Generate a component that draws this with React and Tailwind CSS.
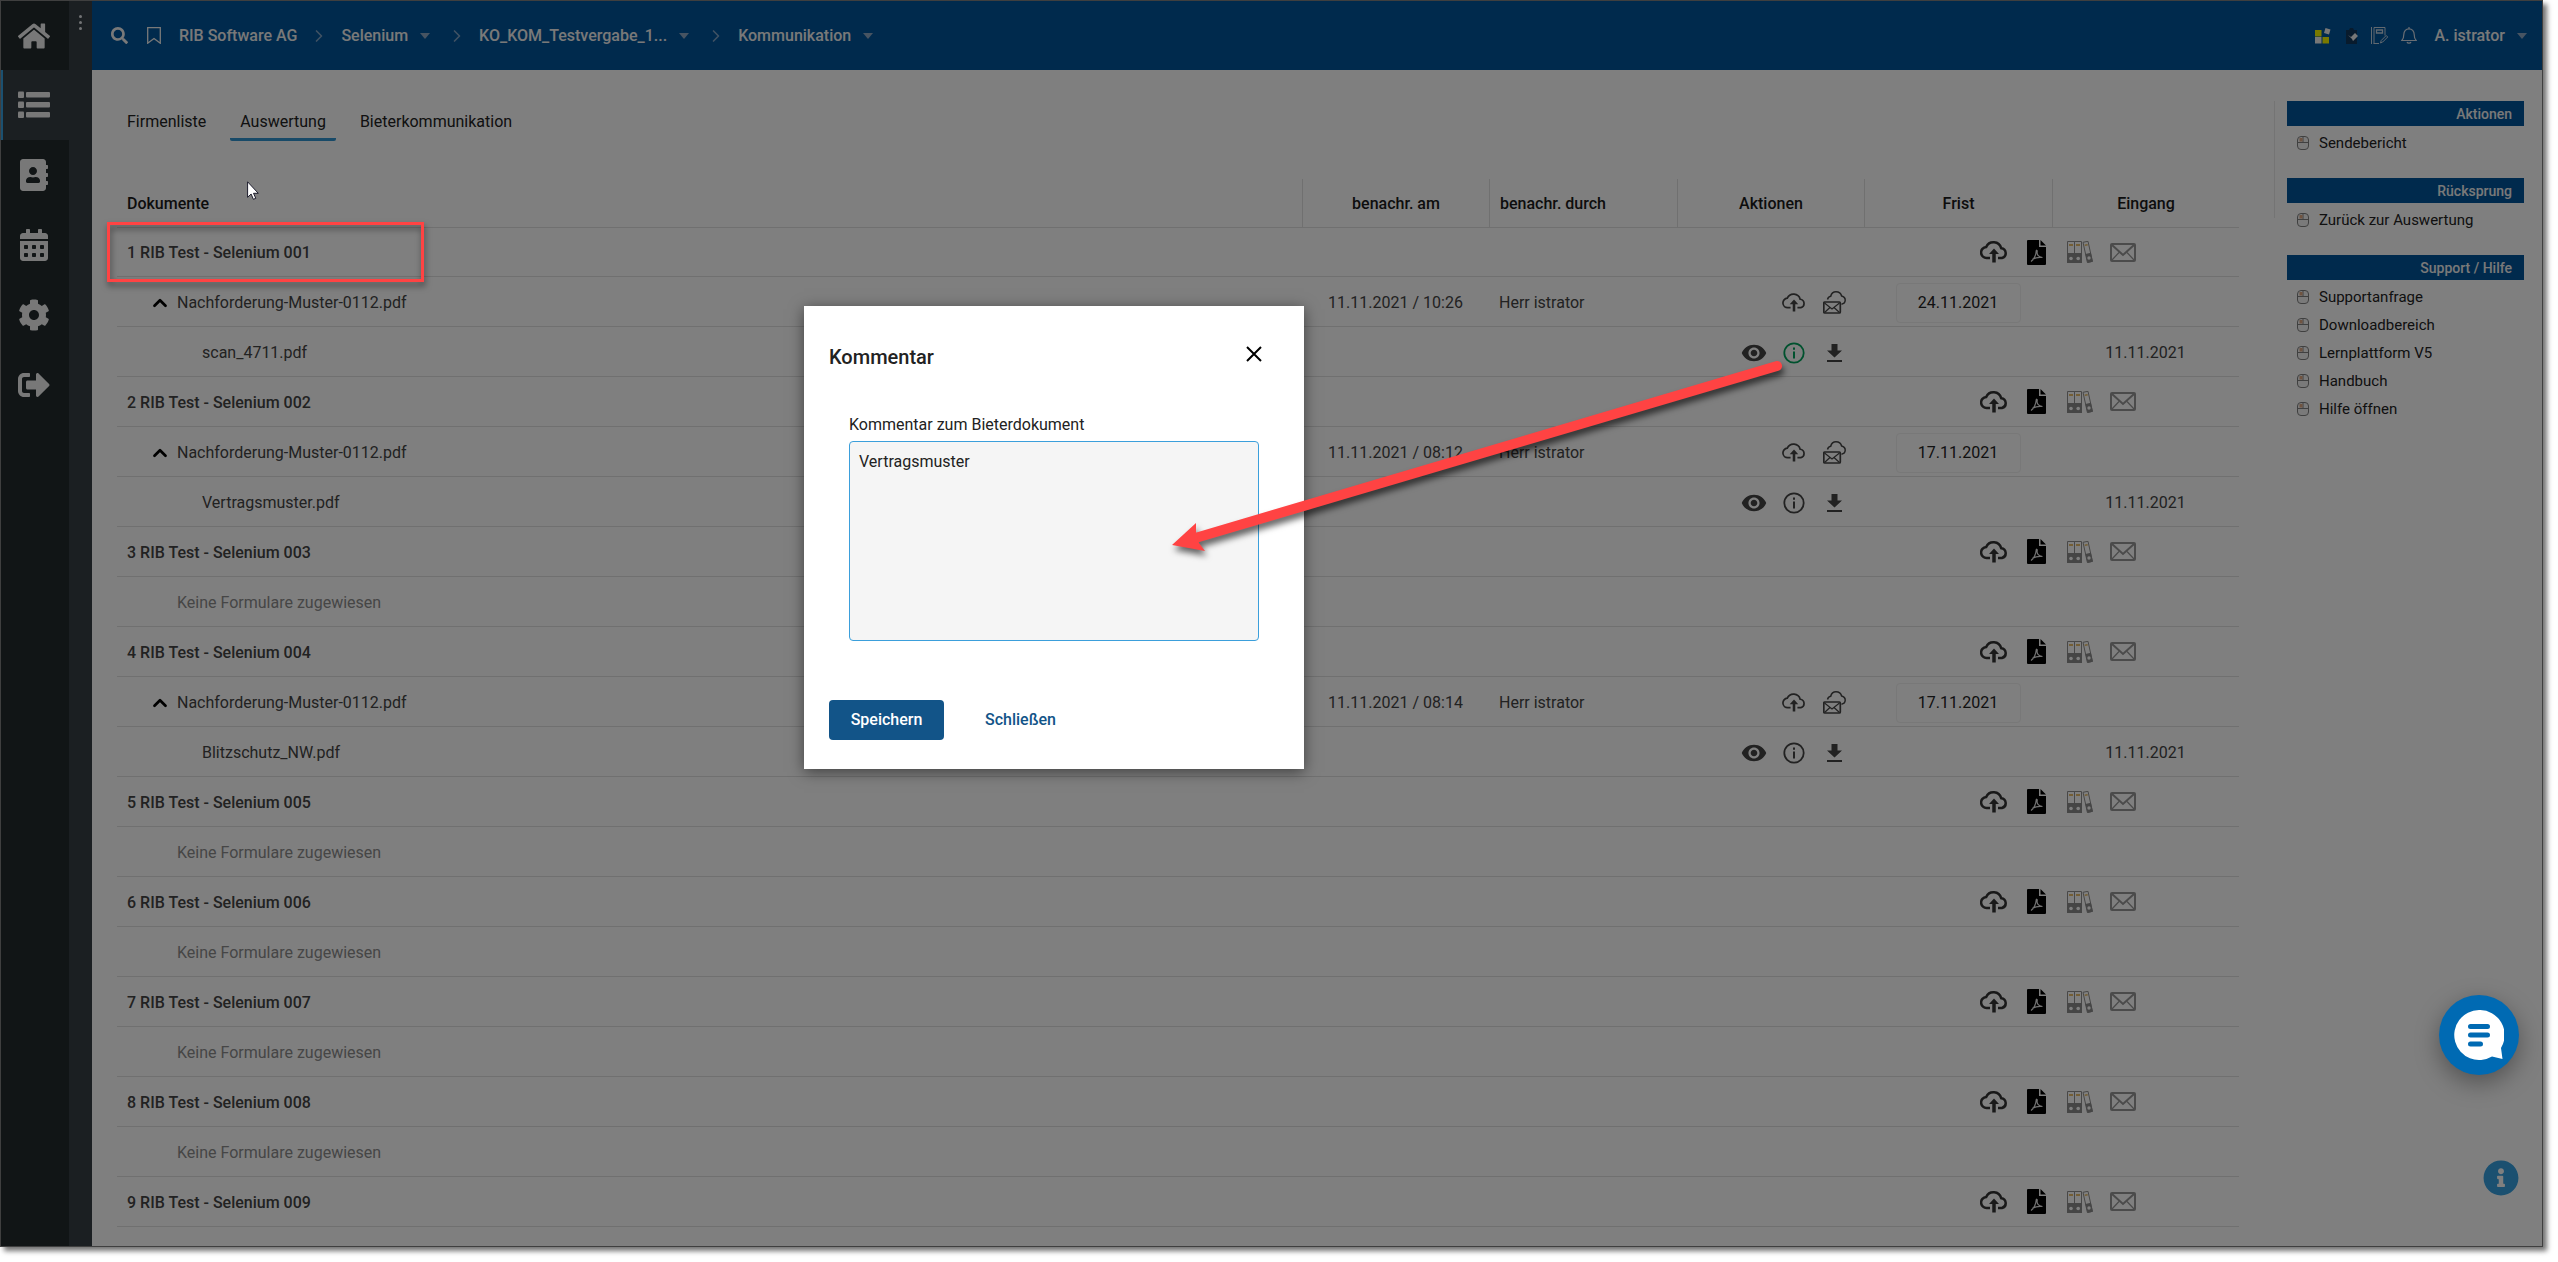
import { useState } from "react";
import { FaHome, FaAddressBook, FaCalendarAlt, FaCog, FaSignOutAlt, FaSearch, FaInfoCircle } from "react-icons/fa";
import { IoMdEye } from "react-icons/io";
import { FiChevronRight, FiChevronUp } from "react-icons/fi";

const navItems = [
    { label: "Start", Icon: FaHome },
    { label: "Listen", Icon: ListIcon, active: true },
    { label: "Adressbuch", Icon: FaAddressBook },
    { label: "Kalender", Icon: FaCalendarAlt },
    { label: "Einstellungen", Icon: FaCog },
    { label: "Abmelden", Icon: FaSignOutAlt },
];

const crumbs = [
    { label: "RIB Software AG" },
    { label: "Selenium", menu: true },
    { label: "KO_KOM_Testvergabe_1...", menu: true },
    { label: "Kommunikation", menu: true },
];

const tabs = ["Firmenliste", "Auswertung", "Bieterkommunikation"];

const form = "Nachforderung-Muster-0112.pdf";

const bidders = [
    { name: "1 RIB Test - Selenium 001", form, sent: "11.11.2021 / 10:26", by: "Herr istrator", due: "24.11.2021", file: "scan_4711.pdf", received: "11.11.2021", commented: true },
    { name: "2 RIB Test - Selenium 002", form, sent: "11.11.2021 / 08:12", by: "Herr istrator", due: "17.11.2021", file: "Vertragsmuster.pdf", received: "11.11.2021" },
    { name: "3 RIB Test - Selenium 003" },
    { name: "4 RIB Test - Selenium 004", form, sent: "11.11.2021 / 08:14", by: "Herr istrator", due: "17.11.2021", file: "Blitzschutz_NW.pdf", received: "11.11.2021" },
    { name: "5 RIB Test - Selenium 005" },
    { name: "6 RIB Test - Selenium 006" },
    { name: "7 RIB Test - Selenium 007" },
    { name: "8 RIB Test - Selenium 008" },
    { name: "9 RIB Test - Selenium 009", collapsed: true },
];

const sideMenus = [
    { title: "Aktionen", links: ["Sendebericht"] },
    { title: "Rücksprung", links: ["Zurück zur Auswertung"] },
    { title: "Support / Hilfe", links: ["Supportanfrage", "Downloadbereich", "Lernplattform V5", "Handbuch", "Hilfe öffnen"] },
];

function ListIcon({ className }) {
    return (
        <svg viewBox="0 0 32 32" className={className} fill="currentColor">
            <rect y="2.500" width="6" height="6.500" rx="1" />
            <rect y="12.500" width="6" height="6.500" rx="1" />
            <rect y="22.500" width="6" height="6.500" rx="1" />
            <rect x="8" y="3" width="24" height="5.500" rx="1" />
            <rect x="8" y="13" width="24" height="5.500" rx="1" />
            <rect x="8" y="23" width="24" height="5.500" rx="1" />
        </svg>
    );
}

function CloudUpload({ className, strokeWidth = 2 }) {
    return (
        <svg viewBox="0 0 28 22" className={className} fill="none" stroke="currentColor" strokeWidth={strokeWidth}>
            <path d="M10 17H7a5.500 5.500 0 0 1-.8-11 8 8 0 0 1 15 1.200A5 5 0 0 1 22 17h-4" />
            <path d="M14 21.500v-9" strokeWidth={strokeWidth + 1} />
            <path d="M14 7.500l5 5.500H9z" fill="currentColor" stroke="none" />
        </svg>
    );
}

function PdfFile() {
    return (
        <svg viewBox="0 0 19 25" className="w-[19px] h-[25px]">
            <path d="M1 0h11v7h7v17a1 1 0 0 1-1 1H1a1 1 0 0 1-1-1V1a1 1 0 0 1 1-1z" />
            <path d="M13.500 0l5.500 5.500h-5.500z" />
            <path d="M4 21.500c2.500-1.500 5-6 5.200-10.500 0-1.200 1.200-1 1 .3-.6 3.500 1 5.500 5.300 6.200M5.500 19.200c3-1.600 6.500-2.200 10-1.700" fill="none" stroke="#e5e5e5" strokeWidth="1.200" />
        </svg>
    );
}

function Binders() {
    return (
        <svg viewBox="0 0 26 22" className="w-[26px] h-[22px]">
            <g fill="#fff" stroke="#909090">
                <path d="M.5.500h7v21h-7zM7.500.500h7v21h-7zM16 1.300l5-1 4.400 20-5 1.200z" />
            </g>
            <g fill="#8c8c8c">
                <path d="M0 12h7.500v10H0zM7.500 12H15v10H7.500zM18.300 13l5.600-1.200 2 9-5.400 1.200z" />
            </g>
            <path d="M2 3h4v2H2zM9 3h4v2H9zM17.500 3.500l3-.6.4 1.600-3 .6z" fill="#e8bd6a" />
            <g fill="#fff">
                <circle cx="4" cy="17.500" r="1.800" />
                <circle cx="11.200" cy="17.500" r="1.800" />
                <circle cx="22" cy="17" r="1.700" />
            </g>
        </svg>
    );
}

function Mail() {
    return (
        <svg viewBox="0 0 26 19" className="w-[26px] h-[19px]" fill="none" stroke="#969696" strokeWidth="2">
            <rect x="1" y="1" width="24" height="17" rx="1" />
            <path d="M2 2l11 10L24 2" />
            <path d="M2 17l7-7.500M24 17l-7-7.500" strokeWidth="1.200" />
        </svg>
    );
}

function CloudMail() {
    return (
        <svg viewBox="0 0 23 23" className="w-[23px] h-[23px]" fill="none" stroke="currentColor" strokeWidth="1.500">
            <path d="M4.500 8.500C5 6.500 6.500 5.500 7.700 5.300 8.500 2 11 .8 13 .8c3 0 5 1.700 5.600 4.200 2.500.6 3.700 2.300 3.600 4.300-.1 2.200-1.500 3.600-3.700 3.900" />
            <rect x=".8" y="11" width="16.500" height="11" rx="1" strokeWidth="1.700" />
            <path d="M1.500 12L9 18l7.500-6M1.500 21.500L7 16.500M16.500 21.500L11 16.500" strokeWidth="1.200" />
        </svg>
    );
}

function InfoRing() {
    return (
        <svg viewBox="0 0 22 22" className="w-[22px] h-[22px]" fill="none" stroke="currentColor" strokeWidth="1.800">
            <circle cx="11" cy="11" r="9.700" />
            <path d="M11 9.500v7M11 5.500v2.200" strokeWidth="2" />
        </svg>
    );
}

function Download() {
    return (
        <svg viewBox="0 0 15 18" className="w-[15px] h-[18px]" fill="currentColor">
            <path d="M4.500 0h6v6.500H15l-7.500 7L0 6.500h4.500zM0 16h15v2H0z" />
        </svg>
    );
}

function MouseIcon() {
    return (
        <svg viewBox="0 0 12 14" className="w-3 h-[14px] shrink-0" fill="none" stroke="#808080" strokeWidth="1">
            <rect x=".5" y=".5" width="11" height="13" rx="3.500" fill="#f5f5f5" />
            <path d="M1 6.500h10M6 1v5.500" />
            <path d="M2.500 2h3v3.500h-3z" fill="#e0a882" stroke="none" />
        </svg>
    );
}

function Caret() {
    return (
        <svg viewBox="0 0 10 6" className="w-[10px] h-[6px] text-[#8fa9c4]" fill="currentColor">
            <path d="M0 0h10L5 6z" />
        </svg>
    );
}

function IconSlot({ label, className = "w-10", children }) {
    return (
        <button type="button" aria-label={label} className={`${className} h-10 flex items-center justify-center`}>
            {children}
        </button>
    );
}

function Sidebar() {
    return (
        <div className="flex shrink-0 bg-[#363e44]">
            <nav className="w-[68px] bg-[#232b2d] text-[#f0f0f0]">
                {navItems.map(({ label, Icon, active }) => (
                    <a
                        key={label}
                        href="#"
                        aria-label={label}
                        className={`h-[70px] pr-1 flex items-center justify-center border-l-2 first:h-[69px] ${active ? "bg-[#363e44] border-[#36a0e0]" : "border-transparent"}`}
                    >
                        <Icon className="w-8 h-8" />
                    </a>
                ))}
            </nav>
            <div className="w-[23px] flex flex-col items-center gap-[3px] pt-[14px]">
                <span className="w-[3px] h-[3px] rounded-full bg-gray-200" />
                <span className="w-[3px] h-[3px] rounded-full bg-gray-200" />
                <span className="w-[3px] h-[3px] rounded-full bg-gray-200" />
            </div>
        </div>
    );
}

function TopBar() {
    return (
        <header className="h-[69px] shrink-0 bg-[#00549a] text-[#f2f2f2] flex items-center justify-between pl-[19px] pr-[15px] font-medium">
            <div className="flex items-center">
                <button type="button" aria-label="Suche"><FaSearch className="w-[17px] h-[17px]" /></button>
                <button type="button" aria-label="Lesezeichen" className="ml-[19px] mr-[18px]">
                    <svg viewBox="0 0 14 17" className="w-[14px] h-[17px]" fill="none" stroke="currentColor" strokeWidth="1.300">
                        <path d="M.7.700h12.600v15.500L7 11.500.7 16.200z" />
                    </svg>
                </button>
                {crumbs.map((crumb, i) => (
                    <div key={crumb.label} className="flex items-center">
                        {i > 0 && <FiChevronRight className="w-5 h-5 mx-3 text-[#7fa3c6]" />}
                        <a href="#">{crumb.label}</a>
                        {crumb.menu && <button type="button" aria-label="Menü" className="ml-3 mr-[5px]"><Caret /></button>}
                    </div>
                ))}
            </div>
            <div className="flex items-center">
                <svg viewBox="0 0 16 16" className="w-4 h-4">
                    <path d="M0 2h6.500v6.500H0zM7.500 9H14v6.500H7.500z" fill="#f2f200" />
                    <path d="M0 9h6.500v6.500H0zM10.500 0l5 1.500-1.500 5-5-1.500z" fill="#eee" />
                </svg>
                <svg viewBox="0 0 13 16" className="w-[13px] h-4 ml-[14px]">
                    <path d="M1 2h3l1-2h3l1 2h3v14H1z" fill="#10365a" />
                    <path d="M3 7l3 2 4-4 3 3-5 5-1-2z" fill="#eee" />
                </svg>
                <svg viewBox="0 0 17 17" className="w-[17px] h-[17px] ml-[13px]" fill="none" stroke="#c4d2e0" strokeWidth="1">
                    <path d="M.5 0v17M3 16.500V.5h11v8M2.500 16.500H8" />
                    <path d="M5.500 3h6v3h-6z" strokeWidth="1.300" />
                    <path d="M9.500 16l.7-2.500 5-5 1.500 1.500-5 5z" />
                </svg>
                <svg viewBox="0 0 16 17" className="w-4 h-[17px] ml-[13px]" fill="none" stroke="#d4dde8" strokeWidth="1.200">
                    <path d="M.8 13.500h14.400c-1.700-1.500-2-3-2-6C13.200 4 11 1.800 8 1.800S2.800 4 2.800 7.500c0 3-.3 4.500-2 6zM8 0v1.800M6 15c.6 1.500 3.400 1.500 4 0" />
                </svg>
                <button type="button" className="flex items-center gap-3 ml-[17px]">
                    A. istrator
                    <Caret />
                </button>
            </div>
        </header>
    );
}

const line = "border-b border-[#e0e0e0]";
const cell = `${line} p-0 pt-[2px]`;

function BidderRows({ bidder, first }) {
    return (
        <>
            <tr className={first ? "h-[49px]" : "h-[50px]"}>
                <td className={`${cell} pl-[10px] font-medium`} colSpan={4}>{bidder.name}</td>
                <td className={`${line} p-0`} colSpan={2}>
                    <div className="flex justify-end pr-[95px]">
                        <IconSlot label="Hochladen" className="w-[43px]"><CloudUpload className="w-7 h-[22px] text-[#333]" strokeWidth={2.5} /></IconSlot>
                        <IconSlot label="PDF" className="w-[43px]"><PdfFile /></IconSlot>
                        <IconSlot label="Archiv" className="w-[43px]"><Binders /></IconSlot>
                        <IconSlot label="Nachricht" className="w-[43px]"><Mail /></IconSlot>
                    </div>
                </td>
            </tr>
            {bidder.form && (
                <>
                    <tr className="h-[50px]">
                        <td className={cell}>
                            <div className="flex items-center pl-[32px] gap-[6px]">
                                <button type="button" aria-label="Zuklappen"><FiChevronUp className="w-[22px] h-[22px] text-black" strokeWidth={3} /></button>
                                {bidder.form}
                            </div>
                        </td>
                        <td className={`${cell} text-center`}>{bidder.sent}</td>
                        <td className={`${cell} pl-[10px]`}>{bidder.by}</td>
                        <td className={cell}>
                            <div className="flex justify-end pr-[10px]">
                                <IconSlot label="Hochladen"><CloudUpload className="w-6 h-[19px]" /></IconSlot>
                                <IconSlot label="Senden"><CloudMail /></IconSlot>
                            </div>
                        </td>
                        <td className={`${cell} text-center`}>
                            <input
                                aria-label="Frist"
                                defaultValue={bidder.due}
                                className="w-[125px] h-10 text-center text-[#222] border border-[#f0f0f0] rounded-sm align-middle"
                            />
                        </td>
                        <td className={cell} />
                    </tr>
                    <tr className="h-[50px]">
                        <td className={`${cell} pl-[85px]`}>{bidder.file}</td>
                        <td className={cell} />
                        <td className={cell} />
                        <td className={cell}>
                            <div className="flex justify-end pr-[10px]">
                                <IconSlot label="Ansehen"><IoMdEye className="w-7 h-7" /></IconSlot>
                                <IconSlot label="Kommentar" className={bidder.commented ? "w-10 text-[#00a35c]" : "w-10"}><InfoRing /></IconSlot>
                                <IconSlot label="Herunterladen"><Download /></IconSlot>
                            </div>
                        </td>
                        <td className={cell} />
                        <td className={`${cell} text-center`}>{bidder.received}</td>
                    </tr>
                </>
            )}
            {!bidder.form && !bidder.collapsed && (
                <tr className="h-[50px]">
                    <td className={`${cell} pl-[60px] text-[#8c8c8c]`} colSpan={6}>Keine Formulare zugewiesen</td>
                </tr>
            )}
        </>
    );
}

function DocumentTable() {
    const head = `${cell} border-l font-medium`;
    return (
        <table className="w-full table-fixed border-separate border-spacing-0 mt-[38px] text-[#444]">
            <colgroup>
                <col />
                <col className="w-[187px]" />
                <col className="w-[188px]" />
                <col className="w-[187px]" />
                <col className="w-[188px]" />
                <col className="w-[187px]" />
            </colgroup>
            <thead className="text-[#1a1a1a]">
                <tr className="h-[49px]">
                    <th className={`${cell} pl-[10px] font-medium text-left`}>Dokumente</th>
                    <th className={head}>benachr. am</th>
                    <th className={`${head} pl-[10px] text-left`}>benachr. durch</th>
                    <th className={head}>Aktionen</th>
                    <th className={head}>Frist</th>
                    <th className={head}>Eingang</th>
                </tr>
            </thead>
            <tbody>
                {bidders.map((b, i) => <BidderRows key={b.name} bidder={b} first={i === 0} />)}
            </tbody>
        </table>
    );
}

function SidePanel() {
    return (
        <aside className="w-[250px] shrink-0 flex gap-3 pt-[31px]">
            <div className="w-px h-[117px] bg-[#e8e8e8]" />
            <div className="flex-1 flex flex-col gap-[34px]">
                {sideMenus.map(menu => (
                    <section key={menu.title}>
                        <h2 className="h-[25px] px-3 flex items-center justify-end bg-[#00549a] text-[#f2f2f2] text-sm font-medium">
                            {menu.title}
                        </h2>
                        <ul className="pt-[3px] -mb-[13px]">
                            {menu.links.map(link => (
                                <li key={link} className="h-7 flex items-center gap-[10px] pl-[10px] text-[15px] text-[#222]">
                                    <MouseIcon />
                                    <a href="#">{link}</a>
                                </li>
                            ))}
                        </ul>
                    </section>
                ))}
            </div>
        </aside>
    );
}

function CommentDialog({ children }) {
    const [comment, setComment] = useState("Vertragsmuster");

    return (
        <form role="dialog" aria-labelledby="dialog-title" className="absolute left-[803px] top-[305px] w-[500px] bg-white px-[25px] pt-9 pb-[29px] shadow-[0_3px_14px_rgba(0,0,0,0.5)] text-[#222]">
            <div className="flex items-start justify-between">
                <h1 id="dialog-title" className="text-xl leading-[30px] font-medium">Kommentar</h1>
                <button type="button" aria-label="Dialog schließen" className="mt-1 mr-[17px] text-black">
                    <svg viewBox="0 0 16 16" className="w-4 h-4" stroke="currentColor" strokeWidth="2">
                        <path d="M1 1l14 14M15 1L1 15" />
                    </svg>
                </button>
            </div>
            <div className="px-5 pt-[41px] pb-[59px]">
                <label htmlFor="comment" className="block h-7 leading-6">Kommentar zum Bieterdokument</label>
                <textarea
                    id="comment"
                    value={comment}
                    onChange={e => setComment(e.target.value)}
                    className="block w-full h-[200px] px-[9px] py-2 leading-6 bg-[#f5f5f5] border border-[#3b9fdb] rounded-sm resize-none outline-none"
                />
            </div>
            <div className="flex gap-5 font-medium">
                <button type="button" className="w-[115px] h-10 rounded bg-[#125488] text-white">Speichern</button>
                <button type="button" className="h-10 px-[21px] text-[#125488]">Schließen</button>
            </div>
            {children}
        </form>
    );
}

export default function App() {
    const [activeTab, setActiveTab] = useState("Auswertung");

    return (
        <div className="h-screen pr-[15px] pb-[15px] bg-white overflow-hidden text-base leading-6 font-['Roboto',sans-serif]">
            <div className="relative h-full flex border border-[#3f3f3f] shadow-[4px_4px_5px_rgba(0,0,0,0.55)]">
                <Sidebar />
                <div className="flex-1 min-w-0 flex flex-col bg-white overflow-hidden">
                    <TopBar />
                    <div className="flex-1 min-h-0 flex gap-[35px] pl-[25px] pr-[18px]">
                        <main className="flex-1 min-w-0 pt-[31px]">
                            <div role="tablist" className="flex gap-[14px] text-[#222]">
                                {tabs.map(tab => (
                                    <button
                                        key={tab}
                                        type="button"
                                        role="tab"
                                        aria-selected={tab === activeTab}
                                        onClick={() => setActiveTab(tab)}
                                        className={`h-10 px-[10px] pt-1 border-b-3 rounded-xs ${tab === activeTab ? "border-[#3194d0]" : "border-transparent"}`}
                                    >
                                        {tab}
                                    </button>
                                ))}
                            </div>
                            <DocumentTable />
                        </main>
                        <SidePanel />
                    </div>
                </div>
                <button type="button" aria-label="Information" className="absolute right-[23px] bottom-[50px] text-[#36a0e0]">
                    <FaInfoCircle className="w-9 h-9" />
                </button>

                <div className="absolute inset-0 bg-black/50" />

                <CommentDialog>
                    <svg viewBox="0 0 620 200" className="absolute left-[360px] top-[50px] w-[620px] h-[200px] pointer-events-none drop-shadow-[2px_5px_3px_rgba(0,0,0,0.6)]">
                        <path d="M28 183L613 10" stroke="#ff4343" strokeWidth="10" strokeLinecap="round" />
                        <path d="M8 189L32 167l0 10 3 10 6 8z" fill="#ff4343" />
                    </svg>
                </CommentDialog>

                <div className="absolute left-[106px] top-[221px] w-[317px] h-[60px] border-3 border-[#ff4343] drop-shadow-[1px_4px_3px_rgba(0,0,0,0.5)]" />
                <svg viewBox="0 0 12 19" className="absolute left-[246px] top-[180px] w-3 h-[19px]" fill="#fff" stroke="#1c1c2c" strokeWidth="1">
                    <path d="M.6.800v15.500l3.500-3.300 2.300 5.300 2.400-1-2.300-5h4.800z" />
                </svg>

                <button type="button" aria-label="Chat" className="absolute right-[23px] bottom-[171px] w-20 h-20 rounded-full bg-[#006ab3] flex items-center justify-center shadow-[0_8px_24px_rgba(0,0,0,0.35)]">
                    <svg viewBox="0 0 50 50" className="w-[50px] h-[50px]">
                        <path d="M25 0a25 25 0 1 0 13 46.500L48.500 49 47 38A25 25 0 0 0 25 0z" fill="#fff" />
                        <path d="M16.500 16.500h17M16.500 25h17M16.500 34h10" stroke="#006ab3" strokeWidth="5" strokeLinecap="round" />
                    </svg>
                </button>
            </div>
        </div>
    );
}
